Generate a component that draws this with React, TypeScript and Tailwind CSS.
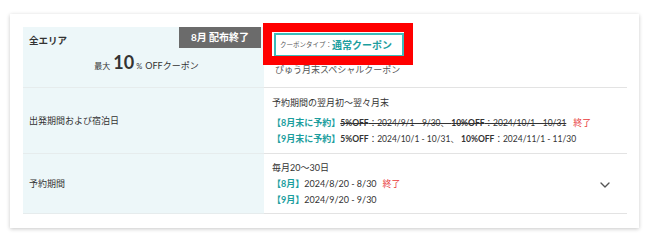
import React from "react";

const font = "font-['Lato','Noto_Sans_CJK_JP',sans-serif]";

function Chevron() {
  return (
    <svg width="16" height="16" viewBox="0 0 24 24" fill="none" stroke="#555" strokeWidth="2" strokeLinecap="round" strokeLinejoin="round">
      <path d="m6 9 6 6 6-6" />
    </svg>
  );
}

export default function App() {
  return (
    <div className={`${font} w-[650px] h-[244px] bg-white pt-[14px] pl-[10px] text-[#333]`}>
      <div className="w-[629px] h-[214px] bg-white shadow-[0_1px_4px_rgba(0,0,0,0.22)] pt-[13px] pl-[13px]">
        <div className="w-[604px] grid grid-cols-[241px_363px]">
          {/* coupon header row */}
          <div className="relative h-[61px] bg-[#edf7f9] border-b border-[#e6eced] pl-[6px] pt-[7px]">
            <div className="text-[9.5px] font-bold leading-[14px]">全エリア</div>
            <div className="absolute right-[3px] top-0 h-[21px] w-[82px] bg-[#6b6b6b] text-white text-[10px] font-bold flex items-center justify-center">
              8月 配布終了
            </div>
            <div className="mt-[4px] flex items-baseline justify-center">
              <span className="text-[8px] mr-[3px]">最大</span>
              <span className="text-[18px] font-bold leading-[20px]">10</span>
              <span className="text-[7.5px] ml-[2px] mr-[3px]">%</span>
              <span className="text-[9px]">OFFクーポン</span>
            </div>
          </div>
          <div className="relative h-[61px] border-b border-[#e3e3e3] pl-[10px] pt-[6px]">
            <div className="flex items-center h-[24px] w-[130px] border-2 border-[#3bbcbc] px-[4px] whitespace-nowrap">
              <span className="text-[6.5px] text-[#555]">クーポンタイプ：</span>
              <span className="text-[10px] font-bold text-[#1c9e9e]">通常クーポン</span>
            </div>
            <div className="mt-[6px] text-[9px] leading-[14px] text-[#555] pl-[1px]">ぴゅう月末スペシャルクーポン</div>
            {/* highlight frame */}
            <div className="absolute left-[-1px] top-[-4px] w-[150px] h-[42px] border-[9px] border-[#ff0000]" />
          </div>

          {/* travel dates row */}
          <div className="h-[66px] bg-[#edf7f9] border-b border-[#e6eced] pl-[6px] flex items-center">
            <span className="text-[9px]">出発期間および宿泊日</span>
          </div>
          <div className="h-[66px] border-b border-[#e3e3e3] pl-[8px] pt-[7px] text-[9px] leading-[16px] whitespace-nowrap">
            <div>予約期間の翌月初〜翌々月末</div>
            <div className="mt-[4px]">
              <span className="text-[#1c9e9e] font-bold">【8月末に予約】</span>
              <span className="line-through text-[8.5px]">
                <b>5%OFF</b>：2024/9/1 - 9/30、 <b>10%OFF</b>：2024/10/1 - 10/31
              </span>
              <span className="text-[#e83a3a] ml-[7px]">終了</span>
            </div>
            <div>
              <span className="text-[#1c9e9e] font-bold">【9月末に予約】</span>
              <span className="text-[8.5px]">
                <b>5%OFF</b>：2024/10/1 - 10/31、 <b>10%OFF</b>：2024/11/1 - 11/30
              </span>
            </div>
          </div>

          {/* booking period row */}
          <div className="h-[60px] bg-[#edf7f9] border-b border-[#e6eced] pl-[6px] flex items-center">
            <span className="text-[9px]">予約期間</span>
          </div>
          <div className="h-[60px] border-b border-[#e3e3e3] pl-[8px] pr-[14px] flex items-center justify-between text-[9px] leading-[16px] whitespace-nowrap">
            <div className="pt-[1px]">
              <div>毎月20〜30日</div>
              <div>
                <span className="text-[#1c9e9e] font-bold">【8月】</span>2024/8/20 - 8/30
                <span className="text-[#e83a3a] ml-[6px]">終了</span>
              </div>
              <div>
                <span className="text-[#1c9e9e] font-bold">【9月】</span>2024/9/20 - 9/30
              </div>
            </div>
            <div className="pt-[3px]">
              <Chevron />
            </div>
          </div>
        </div>
      </div>
    </div>
  );
}
